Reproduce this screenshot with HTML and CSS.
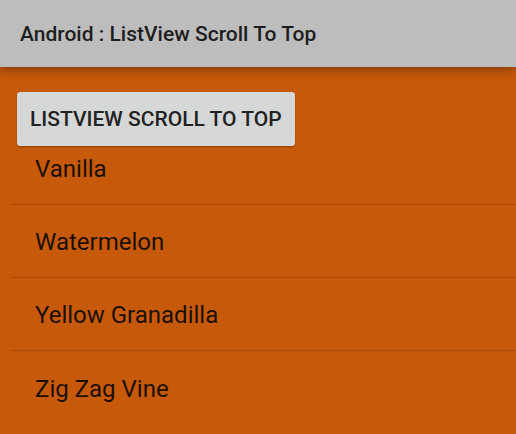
FILE: index.html
```html
<!DOCTYPE html>
<html lang="en">
<head>
  <meta charset="UTF-8">
  <meta name="viewport" content="width=device-width, initial-scale=1.0">
  <title>Android : ListView Scroll To Top</title>
  <link rel="stylesheet" href="styles.css">
</head>
<body>
  <header class="app-bar">
    <h1>Android : ListView Scroll To Top</h1>
  </header>
  <main class="content">
    <button class="scroll-btn" type="button">ListView Scroll To Top</button>
    <ul class="list">
      <li>Vanilla</li>
      <li>Watermelon</li>
      <li>Yellow Granadilla</li>
      <li>Zig Zag Vine</li>
    </ul>
  </main>
</body>
</html>
```

FILE: styles.css
```css
html, body { height: 100%; }
body { margin: 0; font-family: Roboto, 'Noto Sans', sans-serif; background-color: #c7590a; overflow: hidden; }
.app-bar { position: relative; z-index: 1; height: 67px; background-color: #bdbdbd; display: flex; align-items: center; padding-left: 20px; box-shadow: 0 3px 9px rgba(70, 30, 0, 0.5); }
.app-bar h1 { margin: 0; font-size: 21px; font-weight: 500; color: #1e1e1e; }
.content { position: relative; padding-top: 65px; }
.scroll-btn { position: absolute; top: 25px; left: 17px; z-index: 2; width: 278px; height: 54px; padding: 0 0 0 13px; text-align: left; background-color: #d6d8d7; color: #222; border: none; border-radius: 3px; font-family: Roboto, sans-serif; font-size: 21px; font-weight: 500; text-transform: uppercase; white-space: nowrap; box-shadow: 0 1px 2px rgba(0, 0, 0, 0.3); }
.list { list-style: none; margin: 0 0 0 11px; padding: 0; }
.list li { height: 72px; border-bottom: 1px solid #a94b08; display: flex; align-items: center; padding: 2px 0 0 24px; box-sizing: border-box; height: 73px; font-size: 24px; color: #1c1006; }
.list li:last-child { border-bottom: none; }
```
